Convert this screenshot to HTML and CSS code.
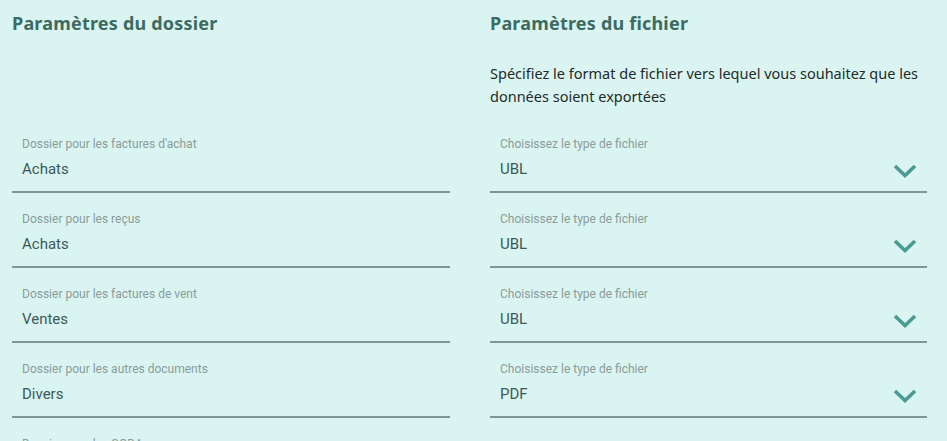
FILE: index.html
```html
<!DOCTYPE html>
<html lang="fr">
<head>
    <meta charset="UTF-8">
    <meta name="viewport" content="width=device-width, initial-scale=1.0">
    <title>Paramètres d'export</title>
    <link rel="stylesheet" href="styles.css">
</head>
<body>
    <div class="settings">
        <div class="settings-head">
            <h2>Paramètres du dossier</h2>
        </div>
        <div class="settings-head">
            <h2>Paramètres du fichier</h2>
            <p class="desc">Spécifiez le format de fichier vers lequel vous souhaitez que les données soient exportées</p>
        </div>

        <div class="field-list">
            <div class="field">
                <label>Dossier pour les factures d'achat</label>
                <div class="value">Achats</div>
            </div>
            <div class="field">
                <label>Dossier pour les reçus</label>
                <div class="value">Achats</div>
            </div>
            <div class="field">
                <label>Dossier pour les factures de vent</label>
                <div class="value">Ventes</div>
            </div>
            <div class="field">
                <label>Dossier pour les autres documents</label>
                <div class="value">Divers</div>
            </div>
            <div class="field">
                <label>Dossier pour les CODA</label>
                <div class="value">CODA</div>
            </div>
        </div>

        <div class="field-list">
            <div class="field select">
                <label>Choisissez le type de fichier</label>
                <div class="value">UBL</div>
                <svg class="chevron" viewBox="0 0 24 14"><path d="M2 2 L12 11.5 L22 2"/></svg>
            </div>
            <div class="field select">
                <label>Choisissez le type de fichier</label>
                <div class="value">UBL</div>
                <svg class="chevron" viewBox="0 0 24 14"><path d="M2 2 L12 11.5 L22 2"/></svg>
            </div>
            <div class="field select">
                <label>Choisissez le type de fichier</label>
                <div class="value">UBL</div>
                <svg class="chevron" viewBox="0 0 24 14"><path d="M2 2 L12 11.5 L22 2"/></svg>
            </div>
            <div class="field select">
                <label>Choisissez le type de fichier</label>
                <div class="value">PDF</div>
                <svg class="chevron" viewBox="0 0 24 14"><path d="M2 2 L12 11.5 L22 2"/></svg>
            </div>
        </div>
    </div>
</body>
</html>
```

FILE: styles.css
```css
body {
    margin: 0;
    padding: 12px 20px 0 12px;
    background: #daf4f1;
    font-family: Roboto, "Liberation Sans", sans-serif;
    overflow: hidden;
}

.settings {
    display: grid;
    grid-template-columns: 438px 437px;
    column-gap: 40px;
}

.settings-head {
    height: 106px;
}

.settings-head h2 {
    margin: 0;
    font-family: "Noto Sans", sans-serif;
    font-size: 18px;
    font-weight: 700;
    line-height: 22px;
    color: #3c6b61;
    letter-spacing: 0.2px;
}

.desc {
    margin: 28px 0 0;
    font-family: "Noto Sans", sans-serif;
    font-size: 14.5px;
    line-height: 23px;
    color: #1e2b2a;
}

.field {
    position: relative;
    height: 73px;
    padding: 0 10px;
    border-bottom: 2px solid #7f9894;
}

.field label {
    display: block;
    padding-top: 19px;
    font-size: 12px;
    line-height: 14px;
    color: #8a9c99;
}

.field .value {
    margin-top: 9px;
    font-size: 15px;
    line-height: 18px;
    color: #3c5a57;
}

.chevron {
    position: absolute;
    right: 10px;
    top: 46px;
    width: 24px;
    height: 14px;
    fill: none;
    stroke: #4a9b93;
    stroke-width: 3.6;
}
```
